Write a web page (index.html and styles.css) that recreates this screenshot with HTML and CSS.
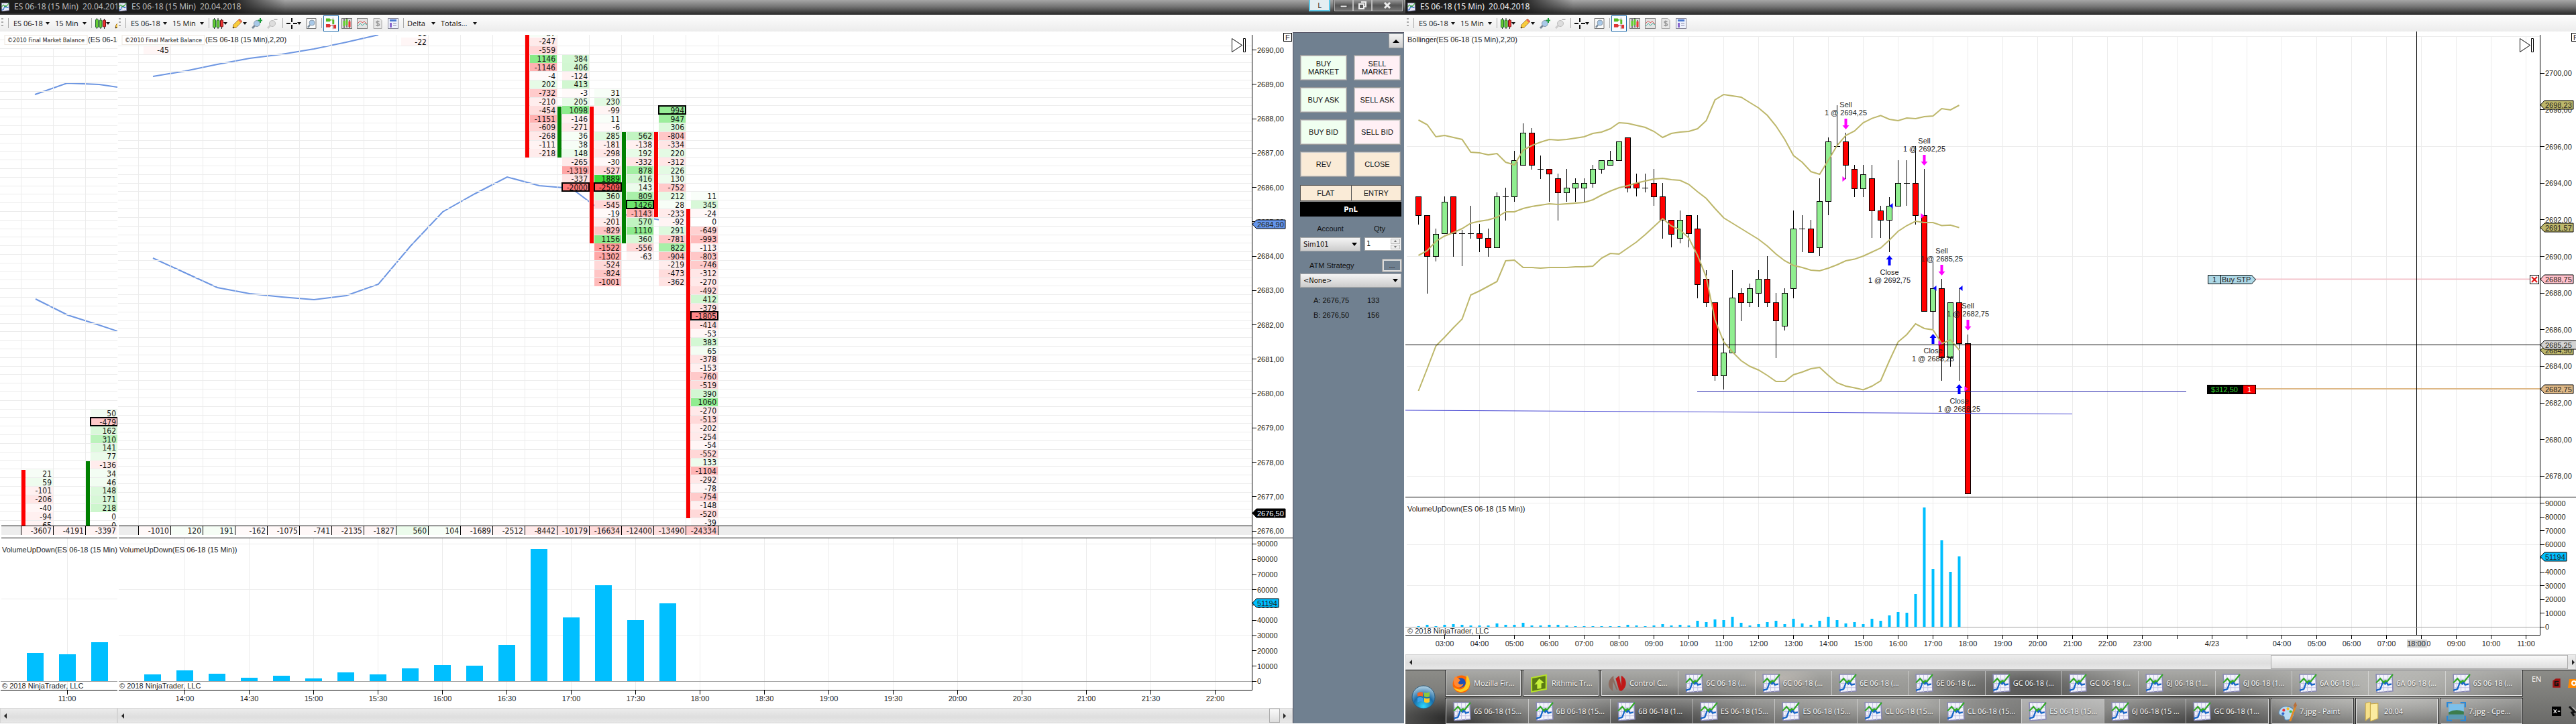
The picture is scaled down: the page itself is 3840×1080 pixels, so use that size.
FILE: index.html
```html
<!DOCTYPE html>
<html lang="en">
<head>
<meta charset="utf-8">
<title>ES 06-18 (15 Min) 20.04.2018</title>
<link rel="stylesheet" href="styles.css">
</head>
<body>
<svg class="sprites" aria-hidden="true">
  <symbol id="i-chart" viewBox="0 0 28 28"><path d="M3 1h23l1 24-23 2z" fill="#f4f4fc" stroke="#8888b4" stroke-width="1.5"/><path d="M8 2v24M14 2v24M20 2v24M4 8h22M4 14h22M4 20h22" stroke="#c4c4e4" stroke-width="1"/><path d="M3 24l6-2 4-11 3 4 1-4 3 5 5-1" fill="none" stroke="#1464c8" stroke-width="2.2" stroke-linejoin="round"/><path d="M3 13l6-6 5 6 2-3 3 1 8-10" fill="none" stroke="#34a828" stroke-width="2.2"/></symbol>
  <symbol id="i-candles" viewBox="0 0 16 16"><path d="M2.500 0v16M8 0v16M13.500 1v15" stroke="#222"/><rect x=".5" y="2" width="4" height="12" rx="1" fill="#6c3" stroke="#263"/><rect x="6" y="3" width="4" height="11" rx="1" fill="#6c3" stroke="#263"/><rect x="11.500" y="3" width="4" height="10" rx="1" fill="#e33" stroke="#611"/></symbol>
  <symbol id="i-pencil" viewBox="0 0 16 16"><path d="M1 15l1-5L11 1l4 4-9 9z" fill="#f8cc3c" stroke="#a8782c"/><path d="M11 1l4 4-2 2-4-4z" fill="#e86a5a"/><path d="M1 15l.5-2.500 2 2z" fill="#222"/></symbol>
  <symbol id="i-zoomin" viewBox="0 0 16 16"><path d="M1 15l5-5" stroke="#789" stroke-width="3"/><circle cx="8" cy="8" r="4.500" fill="#a8c8e8" stroke="#8a9aaa"/><path d="M13 0v7M9.500 3.500h6.500" stroke="#1a9a3a" stroke-width="2"/></symbol>
  <symbol id="i-zoomout" viewBox="0 0 16 16"><path d="M1 15l5-5" stroke="#ccc" stroke-width="3"/><circle cx="8" cy="8" r="4.500" fill="#ddd" stroke="#bbb"/><path d="M10.500 2h5" stroke="#aaa" stroke-width="1.500"/></symbol>
  <symbol id="i-cross" viewBox="0 0 16 16"><path d="M8 0v6M8 10v6M0 8h6M10 8h6" stroke="#111" stroke-width="2"/></symbol>
  <symbol id="i-page" viewBox="0 0 16 16"><path d="M1 .5h14v15H1z" fill="#fafafa" stroke="#777"/><path d="M3 14l3-4" stroke="#789" stroke-width="2.500"/><circle cx="9" cy="7" r="4" fill="#a8c8e8" stroke="#8a9aaa"/></symbol>
  <symbol id="i-trader" viewBox="0 0 18 18"><path d="M12 0v18" stroke="#888"/><path d="M1 1h6l2 2.500-2 2.500H1z" fill="#5b2"/><path d="M9 3.500h3" stroke="#5b2"/><path d="M1 10h6l2 2.500L7 15H1z" fill="#d33"/><path d="M9 12h3" stroke="#d33"/><rect x="11" y="3" width="3" height="7" fill="#5b2"/><rect x="13" y="11" width="4" height="6" fill="#d33"/></symbol>
  <symbol id="i-candbox" viewBox="0 0 16 16"><rect x=".5" y=".5" width="15" height="15" fill="#ddd" stroke="#777"/><path d="M4 1v14M8 0v14M12 3v12" stroke="#222"/><rect x="2.500" y="4" width="3" height="8" fill="#6c3"/><rect x="6.500" y="2" width="3" height="8" fill="#6c3"/><rect x="10.500" y="5" width="3" height="8" fill="#e33"/></symbol>
  <symbol id="i-ind" viewBox="0 0 16 16"><rect x=".5" y=".5" width="15" height="15" fill="#e4e4e4" stroke="#888"/><path d="M1 8l4-4 3 3 3-2 4 4" fill="none" stroke="#d55"/><path d="M1 12l4-4 3 3 4-3 3 2" fill="none" stroke="#4a9"/></symbol>
  <symbol id="i-dollar" viewBox="0 0 16 16"><path d="M2 .5h9l3 3v12H2z" fill="#e8e8e8" stroke="#aaa"/><path d="M10.500 5.500C8 4 5.500 5 6 6.500s4 1 4.500 3S8 12 5.500 10.500M8 3.500v9" fill="none" stroke="#999" stroke-width="1.500"/></symbol>
  <symbol id="i-props" viewBox="0 0 16 16"><rect x=".5" y=".5" width="15" height="15" fill="#eef2fc" stroke="#889"/><path d="M3 3.500h10" stroke="#4a78d0" stroke-width="3"/><path d="M3 7h3v7H3z" fill="#86c"/><path d="M8 8h5M8 11h5" stroke="#88a"/></symbol>
  <symbol id="i-firefox" viewBox="0 0 28 28"><circle cx="14" cy="15" r="12.500" fill="#f60"/><path d="M22 2c5 6 6 16 0 21-6 5-16 4-19-4 5 5 13 5 16-1s1-11 3-16z" fill="#fc2"/><circle cx="13" cy="13" r="7" fill="#1a50b8"/><path d="M5 4c4 1 5 4 8 5-2 1-2 3-4 4 2 3 6 3 8 1-1 6-9 8-13 2-2-4-1-9 1-12z" fill="#f83"/></symbol>
  <symbol id="i-rithmic" viewBox="0 0 28 28"><path d="M3 6l21-4v20L3 26z" fill="#5a7a14" stroke="#b6e02c" stroke-width="2"/><path d="M14 7l7 6-4 1v7l-6 1v-7l-4 1z" fill="#c6f03c"/></symbol>
  <symbol id="i-control" viewBox="0 0 28 28"><path d="M9 3C-1 10 0 20 8 25V11l5 12h2L9 7z" fill="#8c6c60"/><path d="M17 3l3 15V3c9 4 9 17 0 22l-3-1-5-17z" fill="#c01818"/></symbol>
  <symbol id="i-paint" viewBox="0 0 28 28"><path d="M3 12C7 4 22 5 24 14c1 9-7 13-12 12-4-1 0-5-4-6S0 18 3 12z" fill="#b8dcf4" stroke="#5a88b0"/><circle cx="9" cy="12" r="2" fill="#e33"/><circle cx="15" cy="10" r="2" fill="#fb2"/><circle cx="19" cy="14" r="2" fill="#4b4"/><circle cx="8" cy="17" r="2" fill="#36c"/><path d="M26 6L18 28" stroke="#e08a2a" stroke-width="3"/><path d="M26 0l2 5-3 4-2-4z" fill="#b8703a"/></symbol>
  <symbol id="i-folder" viewBox="0 0 28 28"><path d="M5 2l7-2v22l-7 5z" fill="#f6e08a" stroke="#c8a848"/><path d="M12 3l11-1v22l-11 4z" fill="#fcebA0" stroke="#c8a848"/></symbol>
  <symbol id="i-jpg" viewBox="0 0 28 28"><rect x="3" y="3" width="22" height="22" fill="#7cc0ea"/><path d="M3 15q10-6 22-1v5H3z" fill="#3c7c4c"/><path d="M3 18h22v7H3z" fill="#5a9ab0"/><path d="M1 8V1h7M20 1h7v7M27 20v7h-7M8 27H1v-7" fill="none" stroke="#2a88d8" stroke-width="2.500"/></symbol>
</svg>

<main class="desk">
  <section class="win" id="win-a">
    <header class="title"><svg class="appicon"><use href="#i-chart"/></svg><span>ES 06-18 (15 Min)&nbsp; 20.04.2018</span></header>
    <div class="toolbar">
      <i class="grip"></i><i class="sep"></i>
      <label class="dd wide"><select aria-label="Instrument"><option>ES 06-18</option></select></label>
      <label class="dd mid"><select aria-label="Interval"><option>15 Min</option></select></label>
      <i class="sep"></i>
      <button class="tb drop" aria-label="Chart style"><svg><use href="#i-candles"/></svg></button>
      <button class="tb drop" aria-label="Draw"><svg><use href="#i-pencil"/></svg></button>
    </div>
    <div class="chart" id="chart-a"></div>
    <div class="scroll"><button class="arrow left" aria-label="Scroll left"></button></div>
  </section>

  <section class="win" id="win-b">
    <header class="title"><svg class="appicon"><use href="#i-chart"/></svg><span>ES 06-18 (15 Min)&nbsp; 20.04.2018</span>
      <div class="caption">
        <button class="link">L</button>
        <div class="sys">
          <button aria-label="Minimise"><svg viewBox="0 0 14 12"><rect x="2" y="6" width="10" height="3" fill="#eee" stroke="#444"/></svg></button>
          <button aria-label="Restore"><svg viewBox="0 0 14 12"><path d="M5 1h7v7h-2M2 4h7v7H2z" fill="none" stroke="#eee" stroke-width="2"/></svg></button>
          <button class="close" aria-label="Close"><svg viewBox="0 0 14 12"><path d="M3 2l8 8M11 2l-8 8" stroke="#eee" stroke-width="3"/></svg></button>
        </div>
      </div>
    </header>
    <div class="toolbar">
      <i class="grip"></i><i class="sep"></i>
      <label class="dd wide"><select aria-label="Instrument"><option>ES 06-18</option></select></label>
      <label class="dd mid"><select aria-label="Interval"><option>15 Min</option></select></label>
      <i class="sep"></i>
      <button class="tb drop" aria-label="Chart style"><svg><use href="#i-candles"/></svg></button>
      <button class="tb drop" aria-label="Draw"><svg><use href="#i-pencil"/></svg></button>
      <button class="tb" aria-label="Zoom in"><svg><use href="#i-zoomin"/></svg></button>
      <button class="tb" aria-label="Zoom out"><svg><use href="#i-zoomout"/></svg></button>
      <i class="sep"></i>
      <button class="tb drop" aria-label="Cursor"><svg><use href="#i-cross"/></svg></button>
      <button class="tb" aria-label="Find"><svg><use href="#i-page"/></svg></button>
      <i class="sep"></i>
      <button class="tb on" aria-label="Chart trader"><svg><use href="#i-trader"/></svg></button>
      <button class="tb" aria-label="Data series"><svg><use href="#i-candbox"/></svg></button>
      <button class="tb" aria-label="Indicators"><svg><use href="#i-ind"/></svg></button>
      <button class="tb" aria-label="Strategies"><svg><use href="#i-dollar"/></svg></button>
      <button class="tb" aria-label="Properties"><svg><use href="#i-props"/></svg></button>
      <i class="sep"></i>
      <label class="dd narrow"><select aria-label="Mode"><option>Delta</option></select></label>
      <label class="dd wide"><select aria-label="Totals"><option>Totals...</option></select></label>
    </div>
    <div class="body">
      <div class="col">
        <div class="chart" id="chart-b"></div>
        <div class="scroll"><button class="arrow left" aria-label="Scroll left"></button><span class="thumb small"></span><button class="arrow right" aria-label="Scroll right"></button></div>
      </div>
      <aside class="dom">
        <button class="up" aria-label="Collapse"></button>
        <div class="orders">
          <button class="buy">BUY<br>MARKET</button><button class="sell">SELL<br>MARKET</button>
          <button class="buy">BUY ASK</button><button class="sell">SELL ASK</button>
          <button class="buy">BUY BID</button><button class="sell">SELL BID</button>
          <button class="flat">REV</button><button class="flat">CLOSE</button>
        </div>
        <div class="pos"><span>FLAT</span><span>ENTRY</span></div>
        <div class="pnl">PnL</div>
        <div class="fields">
          <label for="acct">Account</label><label for="qty">Qty</label>
          <span class="box"><select id="acct"><option>Sim101</option></select></span>
          <span class="num"><input id="qty" type="number" value="1"><span class="spin"><button aria-label="More"></button><button aria-label="Less"></button></span></span>
        </div>
        <div class="atm"><label for="atm">ATM Strategy</label><button>...</button></div>
        <span class="box"><select id="atm"><option>&lt;None&gt;</option></select></span>
        <dl class="quote"><dt>A: 2676,75</dt><dd>133</dd><dt>B: 2676,50</dt><dd>156</dd></dl>
      </aside>
    </div>
  </section>

  <div class="side">
    <section class="win active" id="win-c">
      <header class="title"><svg class="appicon"><use href="#i-chart"/></svg><span>ES 06-18 (15 Min)&nbsp; 20.04.2018</span></header>
      <div class="toolbar">
        <i class="grip"></i><i class="sep"></i>
        <label class="dd wide"><select aria-label="Instrument"><option>ES 06-18</option></select></label>
        <label class="dd mid"><select aria-label="Interval"><option>15 Min</option></select></label>
        <i class="sep"></i>
        <button class="tb drop" aria-label="Chart style"><svg><use href="#i-candles"/></svg></button>
        <button class="tb drop" aria-label="Draw"><svg><use href="#i-pencil"/></svg></button>
        <button class="tb" aria-label="Zoom in"><svg><use href="#i-zoomin"/></svg></button>
        <button class="tb" aria-label="Zoom out"><svg><use href="#i-zoomout"/></svg></button>
        <i class="sep"></i>
        <button class="tb drop" aria-label="Cursor"><svg><use href="#i-cross"/></svg></button>
        <button class="tb" aria-label="Find"><svg><use href="#i-page"/></svg></button>
        <i class="sep"></i>
        <button class="tb on" aria-label="Chart trader"><svg><use href="#i-trader"/></svg></button>
        <button class="tb" aria-label="Data series"><svg><use href="#i-candbox"/></svg></button>
        <button class="tb" aria-label="Indicators"><svg><use href="#i-ind"/></svg></button>
        <button class="tb" aria-label="Strategies"><svg><use href="#i-dollar"/></svg></button>
        <button class="tb" aria-label="Properties"><svg><use href="#i-props"/></svg></button>
      </div>
      <div class="chart" id="chart-c"></div>
      <div class="scroll"><button class="arrow left" aria-label="Scroll left"></button><span class="thumb large"></span><button class="arrow right" aria-label="Scroll right"></button></div>
    </section>
    <footer class="taskbar">
      <button class="orb" aria-label="Start"><svg viewBox="0 0 36 36"><defs><radialGradient id="orbfill" cx=".5" cy=".9" r=".9"><stop offset="0" stop-color="#2cd8ff"/><stop offset=".5" stop-color="#1a6ca8"/><stop offset="1" stop-color="#b8d4e4"/></radialGradient></defs><circle cx="18" cy="18" r="17" fill="url(#orbfill)" stroke="#2a5a7a"/><path d="M9 12q4-3 8-1v6q-4-2-8 0z" fill="#f06428"/><path d="M19 11q4 2 8-1v7q-4 2-8 0z" fill="#8cc83c"/><path d="M9 19q4-2 8 0v6q-4-2-8 1z" fill="#3ca0e8"/><path d="M19 19q4 2 8 0v6q-4 3-8 0z" fill="#fcc828"/></svg></button>
      <div class="tasks">
        <nav class="trow">
          <a href="#" class="task solo"><svg><use href="#i-firefox"/></svg>Mozilla Fir...</a>
          <a href="#" class="task solo"><svg><use href="#i-rithmic"/></svg>Rithmic Tr...</a>
          <div class="group">
            <a href="#" class="task"><svg><use href="#i-control"/></svg>Control C...</a>
            <a href="#" class="task"><svg><use href="#i-chart"/></svg>6C 06-18 (...</a>
            <a href="#" class="task"><svg><use href="#i-chart"/></svg>6C 06-18 (...</a>
            <a href="#" class="task"><svg><use href="#i-chart"/></svg>6E 06-18 (...</a>
            <a href="#" class="task"><svg><use href="#i-chart"/></svg>6E 06-18 (...</a>
            <a href="#" class="task"><svg><use href="#i-chart"/></svg>GC 06-18 (...</a>
            <a href="#" class="task"><svg><use href="#i-chart"/></svg>GC 06-18 (...</a>
            <a href="#" class="task"><svg><use href="#i-chart"/></svg>6J 06-18 (1...</a>
            <a href="#" class="task"><svg><use href="#i-chart"/></svg>6J 06-18 (1...</a>
            <a href="#" class="task"><svg><use href="#i-chart"/></svg>6A 06-18 (...</a>
            <a href="#" class="task"><svg><use href="#i-chart"/></svg>6A 06-18 (...</a>
            <a href="#" class="task"><svg><use href="#i-chart"/></svg>6S 06-18 (...</a>
          </div>
        </nav>
        <nav class="trow second">
          <div class="group">
            <a href="#" class="task"><svg><use href="#i-chart"/></svg>6S 06-18 (15...</a>
            <a href="#" class="task"><svg><use href="#i-chart"/></svg>6B 06-18 (15...</a>
            <a href="#" class="task"><svg><use href="#i-chart"/></svg>6B 06-18 (1...</a>
            <a href="#" class="task"><svg><use href="#i-chart"/></svg>ES 06-18 (15...</a>
            <a href="#" class="task"><svg><use href="#i-chart"/></svg>ES 06-18 (15...</a>
            <a href="#" class="task"><svg><use href="#i-chart"/></svg>CL 06-18 (15...</a>
            <a href="#" class="task"><svg><use href="#i-chart"/></svg>CL 06-18 (15...</a>
            <a href="#" class="task current"><svg><use href="#i-chart"/></svg>ES 06-18 (15...</a>
            <a href="#" class="task"><svg><use href="#i-chart"/></svg>6J 06-18 (15 ...</a>
            <a href="#" class="task"><svg><use href="#i-chart"/></svg>GC 06-18 (1...</a>
          </div>
          <a href="#" class="task solo"><svg><use href="#i-paint"/></svg>7.jpg - Paint</a>
          <a href="#" class="task solo"><svg><use href="#i-folder"/></svg>20.04</a>
          <a href="#" class="task solo"><svg><use href="#i-jpg"/></svg>7.jpg - Cpe...</a>
        </nav>
      </div>
      <div class="tray">
        <span>EN</span>
        <svg class="t1" viewBox="0 0 12 14"><path d="M1 4l4-3h6v12H1z" fill="#a01414"/><path d="M9 5H4v5h4V8H6" fill="none" stroke="#111" stroke-width="1.500"/></svg>
        <svg class="t2" viewBox="0 0 14 14"><path d="M2 1h12v13H0z" fill="#f80"/><circle cx="9" cy="7" r="3" fill="none" stroke="#fff" stroke-width="2"/></svg>
        <svg class="t3" viewBox="0 0 16 16"><path d="M0 0h16v16H0z"/><path d="M3 5l5 6M8 5l-5 6M10 8h4" stroke="#eee" stroke-width="1.500"/></svg>
        <svg class="t4" viewBox="0 0 12 16"><path d="M1 1l8 8-4 1 3 5" fill="none" stroke="#111" stroke-width="3"/><path d="M6 2l5 5" stroke="#eee"/></svg>
      </div>
    </footer>
  </div>
</main>
<script src="script.js"></script>
</body>
</html>
```
FILE: styles.css
```css
* { box-sizing: border-box; }
body { margin: 0; background: #fff; color: #111; font: 11px/13px "Liberation Sans", Arial, sans-serif; overflow: hidden; }
button, select, input { font: inherit; color: inherit; margin: 0; padding: 0; border: 0; border-radius: 0; background: none; }
.sprites { position: absolute; width: 0; height: 0; }
.desk { display: grid; grid-template-columns: 175fr 1920fr 1745fr; height: 100vh; }
.win { display: flex; flex-direction: column; min-width: 0; min-height: 0; overflow: hidden; background: #fff; }
#win-a, #win-b { padding-bottom: 1px; }
.side { display: flex; flex-direction: column; min-width: 0; }
.side .win { flex: 1; }

/* title bars */
.title { display: flex; align-items: center; gap: 7px; flex: none; height: 22px; padding-left: 1px; overflow: hidden; white-space: nowrap;
  font: 12px/20px "Open Sans", "Noto Sans", sans-serif; color: #c4c4c4; border-bottom: 2px solid #333;
  background: linear-gradient(90deg, #1c1c1c 170px, rgba(28,28,28,0) 250px), linear-gradient(#a6a6a6, #747474 50%, #333); }
.active .title { color: #fff; padding-left: 2px; }
.appicon { width: 13px; height: 13px; flex: none; }
.caption { display: flex; margin-left: auto; align-self: flex-start; gap: 5px; padding-right: 3px; }
.link { width: 32px; height: 17px; border: 2px solid #5cc8e8; border-top: 0; background: #e4eef2; font: 11px/14px "Open Sans", sans-serif; color: #222; }
.sys { display: flex; height: 18px; border: 1px solid #222; border-top: 0; }
.sys button { width: 28px; border: 1px solid #bbb; border-top: 0; background: linear-gradient(#999, #555 50%, #777); }
.sys .close { width: 46px; }
.sys svg { display: block; width: 14px; height: 12px; margin: 0 auto; }

/* toolbars */
.toolbar { display: flex; align-items: center; flex: none; height: 25px; padding-left: 2px; overflow: hidden; background: linear-gradient(#fdfdfd, #ececec); font: 11px/16px "Open Sans", "Noto Sans", sans-serif; }
.grip { width: 3px; height: 15px; margin-right: 7px; flex: none; background: repeating-linear-gradient(#aaa 0 2px, transparent 2px 5px); }
.sep { width: 1px; height: 15px; margin: 0 5px 0 7px; flex: none; background: #aaa; }
.dd { display: flex; align-items: center; margin-right: 8px; flex: none; }
.dd select { appearance: none; height: 16px; }
.dd::after, .drop::after { content: ""; border: 3px solid transparent; border-top: 4px solid #111; border-bottom: 0; flex: none; }
.grip + .sep { margin: 0 7px 0 0; }
.wide select { width: 48px; }
.mid select { width: 41px; }
.narrow select { width: 36px; }
.mid { margin-right: 0; }
.tb { display: flex; align-items: center; flex: none; margin-right: 7px; }
.drop + .sep, .tb + .sep { margin-left: 0; }
.tb svg { width: 16px; height: 16px; flex: none; }
.on { padding: 2px; border: 1px solid #1c68a8; background: #f8fbff; margin: 0 4px 0 -3px; }
.tb.on svg { width: 17px; height: 18px; }

/* chart panes */
.body { display: flex; flex: 1; min-height: 0; padding-right: 2px; }
.col { display: flex; flex-direction: column; flex: 1; min-width: 0; }
.chart { display: flex; flex: 1; min-height: 0; }
.plot { flex: 1; min-width: 0; height: 100%; display: block; overflow: hidden; }
.axis { flex: none; height: 100%; display: block; overflow: hidden; }
.chart text { font: 11px "Liberation Sans", Arial, sans-serif; fill: #222; }
.chart .cell { font: 12px "DejaVu Sans Condensed", "Noto Sans", sans-serif; fill: #111; text-anchor: end; }
.chart .brand { font: 9px "DejaVu Sans Condensed", "Noto Sans", sans-serif; }
.chart .mid-text { text-anchor: middle; }
.chart .light { fill: #fff; }
.chart .gain { fill: #2cd02c; }

/* scroll bars */
.scroll { display: flex; align-items: center; flex: none; height: 23px; border: 1px solid #d4d4d4; background: linear-gradient(#ececec, #dedede 60%, #e8e8e8); }
.arrow { width: 18px; height: 20px; display: flex; align-items: center; justify-content: center; flex: none; }
.arrow::before { content: ""; border: 4px solid transparent; }
.left { padding-right: 8px; }
.left::before { border-right-color: #222; }
.right::before { border-left-color: #222; }
.thumb { height: 21px; margin-left: auto; border: 1px solid #aaa; background: linear-gradient(#fafafa, #dedede); }
.small { width: 16px; }
.large { flex: 0 0 443px; }
#win-c .right { width: 11px; padding-left: 8px; }

/* order entry panel */
.dom { flex: none; width: 166px; display: flex; flex-direction: column; padding: 1px 4px 0 10px; background: #708090; border-left: 1px solid #556; border-top: 1px solid #556; margin-top: 1px; }
.up { align-self: flex-end; width: 22px; height: 22px; margin-right: -3px; border: 1px solid #999; background: linear-gradient(#f4f4f4, #ccc); display: grid; place-items: center; }
.up::before { content: ""; border: 5px solid transparent; border-bottom-color: #000; border-top: 0; }
.orders { display: grid; grid-template-columns: 1fr 1fr; gap: 10px; margin: 10px 1px 0 0; }
.orders button { height: 38px; border: 2px solid #ccc; outline: 1px solid #999; outline-offset: -1px; line-height: 12px; }
.buy { background: #f0fff0; }
.sell { background: #fff0f5; }
.flat { background: #faebd7; }
.pos { display: grid; grid-template-columns: 1fr 1fr; margin-top: 12px; height: 24px; border: 1px solid #555; background: #faebd7; line-height: 23px; text-align: center; }
.pos span + span { border-left: 1px solid #555; }
.pnl { height: 23px; background: #000; color: #fff; font: bold 11px/23px "DejaVu Sans Condensed", "Noto Sans", sans-serif; text-align: center; border-top: 1px solid #888; }
.fields { display: grid; grid-template-columns: 90px 1fr; column-gap: 6px; row-gap: 6px; margin-top: 12px; }
.fields label { text-align: center; }
.fields label + label { text-align: left; padding-left: 14px; }
.box { position: relative; display: flex; height: 21px; border: 1px solid #aaa; background: linear-gradient(#f4f4f4, #ccc); }
.box select { appearance: none; flex: 1; padding: 0 4px; font: 11px/18px "DejaVu Sans Condensed", "Noto Sans", sans-serif; }
.box::after { content: ""; position: absolute; right: 4px; top: 7px; border: 4px solid transparent; border-top: 5px solid #000; border-bottom: 0; pointer-events: none; }
.num { display: flex; height: 20px; border: 1px solid #aaa; background: #fff; min-width: 0; }
.num input { appearance: textfield; width: 20px; flex: 1; min-width: 0; padding-left: 2px; font: 11px/16px "DejaVu Sans Condensed", "Noto Sans", sans-serif; }
.num input::-webkit-inner-spin-button { display: none; }
.spin { display: grid; width: 14px; gap: 1px; margin: 1px; }
.spin button { border: 1px solid #bbb; background: #eee; display: grid; place-items: center; }
.spin button::before { content: ""; border: 2px solid transparent; border-bottom: 3px solid #777; border-top: 0; }
.spin button + button::before { border: 2px solid transparent; border-top: 3px solid #777; border-bottom: 0; }
.atm { display: flex; align-items: center; justify-content: space-between; height: 18px; margin: 12px 0 3px; padding-left: 14px; }
.atm button { width: 28px; height: 18px; border: 2px solid #ddd; outline: 1px solid #999; line-height: 10px; }
.quote { display: grid; grid-template-columns: 80px 1fr; row-gap: 9px; margin: 13px 0 0 20px; }
.quote dd { margin: 0; }

/* task bar */
.taskbar { display: flex; flex: none; height: 81px; border-top: 1px solid #222; padding-left: 9px; color: #fff; font: 11px/14px "Open Sans", "Noto Sans", sans-serif;
  background:
    radial-gradient(60px 20px at 32% 15%, rgba(200,190,180,.5), transparent),
    radial-gradient(160px 50px at 22% 90%, rgba(40,40,40,.8), transparent),
    radial-gradient(120px 40px at 4% 90%, rgba(20,20,20,.8), transparent),
    radial-gradient(180px 60px at 53% 20%, rgba(30,30,30,.7), transparent),
    radial-gradient(150px 50px at 68% 90%, rgba(30,30,30,.7), transparent),
    radial-gradient(200px 60px at 84% 40%, rgba(210,210,205,.6), transparent),
    radial-gradient(200px 40px at 42% 60%, rgba(180,180,175,.5), transparent),
    linear-gradient(#8c8c88, #6a6a68); }
.orb { width: 36px; flex: none; margin-right: 15px; }
.orb svg { display: block; width: 36px; height: 36px; }
.tasks { display: flex; flex-direction: column; gap: 4px; flex: 1; min-width: 0; }
.trow { display: flex; gap: 4px; height: 38px; }
.group { display: flex; flex: 1; min-width: 0; border: 1px solid #e0e0e0; outline: 1px solid #222; }
.task { display: flex; align-items: center; gap: 4px; flex: 1; min-width: 0; padding-left: 8px; overflow: hidden; white-space: nowrap; color: #fff; text-decoration: none; text-shadow: 0 1px 2px #222; background: linear-gradient(rgba(255,255,255,.25), rgba(255,255,255,.05)); }
.task + .task:not(.solo) { border-left: 1px solid rgba(230,230,230,.6); }
.task svg { width: 29px; height: 29px; flex: none; }
.solo { flex: 0 0 112px; border: 1px solid #e0e0e0; outline: 1px solid #222; }
.second .solo { flex-basis: 122px; }
.current { background: linear-gradient(rgba(255,255,255,.55), rgba(255,255,255,.35)); }
.tray { display: grid; grid-template-columns: 30px 24px 12px; grid-template-rows: 38px 38px; row-gap: 4px; align-items: center; flex: none; width: 80px; padding-left: 14px; overflow: hidden; }
.tray span { padding-bottom: 12px; }
.tray svg { height: 16px; width: 14px; }
.t3 { grid-column: 2; }
```
FILE: script.js
```js
/* Chart rendering. Every chart is drawn in desktop coordinates and shifted to its pane. */
const TOP = 47;
const ROW = 12.81;
const GRID = '#ececec';
const line = (x1, y1, x2, y2, c, w = 1) => `<line x1="${x1}" y1="${y1}" x2="${x2}" y2="${y2}" stroke="${c}" stroke-width="${w}"/>`;
const rect = (x, y, w, h, f, extra = '') => `<rect x="${x}" y="${y}" width="${w}" height="${h}" fill="${f}" ${extra}/>`;
const text = (x, y, s, cls = '') => `<text x="${x}" y="${y}" class="${cls}">${s}</text>`;
const poly = (pts, c, w = 2) => `<polyline points="${pts.map(p => p.join(',')).join(' ')}" fill="none" stroke="${c}" stroke-width="${w}"/>`;
const snap = v => Math.floor(v) + 0.5;

function mount(id, x0, plot, axis, axisX, axisW) {
  let out = `<svg class="plot"><g transform="translate(${-x0} ${-TOP})">${plot}</g></svg>`;
  if (axis) out += `<svg class="axis" width="${axisW}"><g transform="translate(${-axisX} ${-TOP})">${axis}</g></svg>`;
  document.getElementById(id).innerHTML = out;
}

function tint(v, kr, kg) {
  if (v === 0) return '#fff';
  const a = Math.min(0.9, 0.02 + Math.abs(v) * (v < 0 ? kr : kg));
  const mix = (c) => Math.round(255 - (255 - c) * a);
  return v < 0 ? `rgb(255,${mix(0)},${mix(0)})` : `rgb(${mix(0)},${mix(211)},${mix(0)})`;
}

/* One footprint column: candle body strip plus a stack of delta cells. */
function footprint(x, first, values, box, bar, base, kr, kg) {
  let s = '';
  if (bar) s += rect(x + 1, bar[1], 6, bar[2] - bar[1], bar[0]);
  values.forEach((v, i) => {
    const yc = base + (first + i) * ROW;
    s += rect(x + 8, Math.round(yc - 5.9), 40, 12, tint(v, kr, kg));
    if (i === box) s += rect(x + 8, Math.round(yc - 6.4), 40, 12, 'none', 'stroke="#000" stroke-width="2"');
    s += text(x + 46, Math.round(yc + 4.6), v, 'cell');
  });
  return s;
}

function deltaRow(x0, xEnd, start, values) {
  let s = rect(x0, 784, xEnd - x0, 19, '#fff') + rect(x0, 785, xEnd - x0, 13, '#ededed');
  values.forEach((v, i) => {
    const x = start + i * 48;
    s += rect(x, 785, 48, 13, tint(v, 0.0000075, 0.0001));
    s += line(x + 0.5, 784, x + 0.5, 798, '#000');
    s += text(x + 46, 796, v, 'cell');
  });
  const end = start + values.length * 48 + 0.5;
  s += line(end, 784, end, 798, '#000');
  return s + line(x0, 784.5, xEnd, 784.5, '#000') + line(x0, 802.5, xEnd, 802.5, '#000');
}

function tag(x, y, s, fill, cls = '', w = 49) {
  return `<path d="M${x} ${y}l6 -6.500h${w - 6}v13h${6 - w}z" fill="${fill}" stroke="#000"/>` + text(x + 7, y + 4, s, cls);
}

const notice = x => rect(x, 52.5, 123, 14, '#fff', 'stroke="#eee8e0"') + text(x + 4, 63, '©2010 Final Market Balance', 'brand');
const skip = x => `<path d="M${x} 57.500v20l15 -10zM${x + 17} 57.500h3v20h-3z" fill="#fff" stroke="#000"/>`;

/* ---------- narrow footprint window ---------- */
(function () {
  let s = '';
  s += poly([[52, 141], [100, 124], [148, 126], [196, 133]], '#6d96e2');
  s += poly([[53, 446], [101, 470], [148, 485], [196, 501]], '#6d96e2');
  for (let y = 59.3; y < 784; y += ROW) s += line(0, snap(y), 175, snap(y), GRID);
  for (const x of [31.5, 79.5, 127.5]) s += line(x, 72, x, 784, GRID);
  s += footprint(31, 50, [21, 59, -101, -206, -40, -94, -65], -1, ['#ff0000', 701, 784], 65.7, 0.0004, 0.0008);
  s += footprint(127, 43, [50, -479, 162, 310, 141, 77, -136, 34, 46, 148, 171, 218, 0, 0], 1, ['#008000', 688, 784], 65.7, 0.0004, 0.0008);
  s += rect(0, TOP, 175, 5, '#fff');
  s += notice(7) + text(131, 63, '(ES 06-18 (15 Min),2,20)');
  s += deltaRow(2, 175, 31, [-3607, -4191, -3397]);
  s += line(100.5, 803, 100.5, 1029, GRID) + line(2, 893.5, 175, 893.5, GRID);
  [[40, 974], [88, 976], [136, 958]].forEach(b => { s += rect(b[0], b[1], 25, 1016 - b[1], '#00bfff'); });
  s += line(1, 1016.5, 175, 1016.5, '#a0a0a0') + line(1, 1029.5, 175, 1029.5, '#000') + line(100.5, 1029, 100.5, 1036, '#000');
  s += text(3, 856, 'VolumeUpDown(ES 06-18 (15 Min))').replace('856', '824') + text(3, 1027, '© 2018 NinjaTrader, LLC') + text(100, 1046, '11:00', 'mid-text');
  mount('chart-a', 0, s);
})();

/* ---------- wide footprint window ---------- */
(function () {
  const base = 74.6, kr = 0.00025, kg = 0.00039, R = 1867;
  let s = '';
  s += poly([[228, 114], [276, 106], [324, 96], [372, 87], [420, 81], [468, 73], [516, 63], [564, 52]], '#6d96e2');
  s += poly([385, 407, 429, 438, 443, 447, 441, 424, 367, 316, 289, 264, 277, 281, 317, 322, 330].map((y, i) => [228 + 48 * i, y]), '#6d96e2');
  for (let y = 68.2; y < 784; y += ROW) s += line(176, snap(y), R, snap(y), GRID);
  for (let x = 206.5; x < 1072; x += 48) s += line(x, 52, x, 784, GRID);
  s += rect(214, 69, 40, 12, '#fff6f6') + text(252, 79, '-45', 'cell');
  s += rect(598, 56, 40, 12, '#fff6f6') + text(636, 54, '11', 'cell') + text(636, 67, '-22', 'cell');
  const red = '#f80000', green = '#008000';
  s += footprint(782, -2, [37, -247, -559, 1146, -1146, -4, 202, -732, -210, -454, -1151, -609, -268, -111, -218], -1, [red, 52, 235], base, kr, kg);
  s += footprint(830, 1, [384, 406, -124, 413, -3, 205, 1098, -146, -271, 36, 38, 148, -265, -1319, -337, -2000], 15, [green, 159, 235], base, kr, kg);
  s += footprint(878, 5, [31, 230, -99, 11, -6, 285, -181, -298, -30, -527, 1889, -2509, 360, -545, -19, -201, -829, 1156, -1522, -1302, -524, -824, -1001], 11, [red, 159, 363], base, kr, kg);
  s += footprint(926, 10, [562, -138, 192, -332, 878, 416, 143, 809, 1426, -1143, 570, 1110, 360, -556, -63], 8, [green, 197, 363], base, kr, kg);
  s += footprint(974, 7, [994, 947, 306, -804, -334, 220, -312, 226, 130, -752, 212, 28, -233, -92, 291, -781, 822, -904, -219, -473, -362], 0, [red, 197, 324], base, kr, kg);
  s += footprint(1022, 17, [11, 345, -24, 0, -649, -993, -113, -803, -746, -312, -270, -492, 412, -379, -1805, -414, -53, 383, 65, -378, -153, -760, -519, 390, 1060, -270, -513, -202, -254, -54, -552, 133, -1104, -292, -78, -754, -148, -520, -39], 14, [red, 312, 773], base, kr, kg);
  s += rect(175, TOP, 1692, 5, '#fff');
  s += notice(182) + text(306, 63, '(ES 06-18 (15 Min),2,20)') + skip(1836.5);
  s += deltaRow(177, R, 206, [-1010, 120, 191, -162, -1075, -741, -2135, -1827, 560, 104, -1689, -2512, -8442, -10179, -16634, -12400, -13490, -24334]);
  for (const y of [811.5, 879.5, 948.5]) s += line(177, y, R, y, GRID);
  let h = 14 * 60;
  for (let x = 275.5; x < R; x += 96, h += 30) {
    s += line(x, 803, x, 1029, GRID) + line(x, 1029, x, 1036, '#000');
    s += text(x, 1046, `${Math.floor(h / 60)}:${h % 60 ? '30' : '00'}`, 'mid-text');
  }
  [1006, 1000, 1005, 1011, 1008, 1012, 1003, 1006, 997, 992, 993, 962, 819, 921, 873, 925, 900].forEach((y, i) => { s += rect(215 + 48 * i, y, 25, 1016 - y, '#00bfff'); });
  s += line(177, 1016.5, R, 1016.5, '#a0a0a0') + line(177, 1029.5, R, 1029.5, '#000');
  s += text(178, 824, 'VolumeUpDown(ES 06-18 (15 Min))') + text(178, 1027, '© 2018 NinjaTrader, LLC');

  let a = line(1866.5, 52, 1866.5, 1030, '#000');
  for (let p = 2690; p >= 2676; p--) {
    const y = 74.6 + (2690 - p) * 51.25;
    a += line(1867, snap(y), 1873, snap(y), '#000') + text(1874, Math.round(y + 4), p + ',00');
  }
  a += line(1866, 802.5, 1927, 802.5, '#000');
  for (let v = 0; v <= 90000; v += 10000) {
    const y = 1016.4 - v * 0.002277;
    a += line(1867, snap(y), 1873, snap(y), '#000') + text(1874, Math.round(y + 4), v);
  }
  a += tag(1867, 334.5, '2684,90', '#6495ed') + tag(1867, 765.5, '2676,50', '#000', 'light') + tag(1867, 899.5, '51194', '#00bfff', '', 39);
  a += rect(1913.5, 49.5, 12, 12, '#fff', 'stroke="#000"') + text(1916, 60, 'F');
  mount('chart-b', 175, s, a, 1866, 61);
})();

/* ---------- candlestick window ---------- */
(function () {
  const R = 3786;
  const cx = i => 2114.5 + 13 * i;
  /* high, body top, body bottom, low, direction */
  const candles = [
    [293,293,321,335,'r'],[321,321,382,438,'r'],[341,349,382,390,'g'],[293,301,348,348,'g'],[293,293,348,383,'r'],[343,348,348,397,'d'],[307,348,348,356,'d'],[334,348,355,376,'r'],
    [341,355,369,383,'r'],[287,293,369,369,'g'],[280,293,293,329,'d'],[225,239,293,301,'g'],[184,198,246,246,'g'],[191,198,246,253,'r'],[232,252,252,267,'d'],[252,252,259,301,'r'],
    [259,266,287,329,'r'],[252,280,287,301,'g'],[266,273,280,301,'g'],[266,273,280,301,'g'],[246,252,273,280,'g'],[239,239,252,259,'g'],[225,239,246,246,'g'],[211,211,239,239,'g'],
    [205,205,280,287,'r'],[259,273,280,293,'r'],[259,280,280,287,'d'],[252,273,293,307,'r'],[273,293,328,356,'r'],[328,328,349,369,'r'],[314,328,355,363,'g'],[321,321,348,369,'r'],
    [321,341,424,445,'r'],[403,416,451,458,'r'],[451,451,560,568,'r'],[505,526,560,581,'g'],[403,444,526,526,'g'],[430,437,451,479,'r'],[423,430,451,458,'g'],[403,416,437,458,'g'],
    [382,416,451,458,'r'],[437,451,478,534,'r'],[430,437,486,493,'g'],[314,341,430,445,'g'],[321,341,341,376,'d'],[328,341,376,376,'r'],[266,300,369,382,'g'],[205,211,300,321,'g'],
    [157,218,218,218,'d'],[198,211,246,267,'r'],[246,252,281,294,'r'],[246,260,281,294,'g'],[246,266,314,355,'r'],[307,314,328,355,'r'],[294,307,328,376,'g'],[239,273,307,307,'g'],
    [239,273,273,307,'d'],[218,273,321,335,'r'],[252,321,464,464,'r'],[390,430,464,493,'g'],[416,430,533,568,'r'],[451,451,533,547,'g'],[430,451,512,568,'r'],[499,512,736,736,'r']
  ];
  const upper = [179,186,204,202,205,208,227,228,231,229,242,246,224,217,212,208,209,208,206,204,199,197,192,183,184,187,190,196,205,199,197,196,192,180,149,141,143,145,153,161,172,188,208,232,242,256,260,239,217,202,195.5,183,176.6,172.4,178,180,176,177,174,173,162,164,157];
  const middle = [381,374,360,352,347,341,333,330,328,324,316,316,311,308,306,304,305,304,303,302,298,291,285,280,277,273,270,267,266,268,269,275,286,296,311,325,333,341,349,357,367,379,389,396,399,403,404,400,395,389,386.6,382,376,370,358,345,336.5,330,332,332,336.5,335.7,339.5];
  const lower = [583,550,516,503,489,476,440,434,427,420,389,388,399,399,400,399,399,399,398,398,397,385,378,379,370,361,350,338,326,337,343,355,381,413.5,477,510,525,538,546.5,552,560,569,569,559,555,550,548,560,571,576,578.5,581.5,576,568,538,510,499,483,490,492,512.5,507,522];
  const volume = [1,3,1,3,4,3,2,2,2,5,3,3,6,2,2,3,3,2,1,1,1,1,1,1,3,2,1,2,4,2,3,2,9,7,11,10,15,6,2,4,7,9,4,12,5,3,9,15,10,5,7,4,12,9,17,22,21,49,178,86,129,82,105];
  const khaki = '#bdb76b';
  let s = '';
  for (const y of [54.5, 218.5, 382.5, 546.5, 710.5, 750.5, 812.5, 873.5]) s += line(2097, y, R, y, GRID);
  for (let k = 0; k <= 31; k++) {
    const x = 2153.5 + 52 * k;
    s += line(x, 54, x, 947, GRID) + line(x, 947, x, 953, '#000');
    let t = '';
    if (k <= 20) t = String(k + 3).padStart(2, '0') + ':00';
    else if (k === 22) t = '4/23';
    else if (k >= 24) t = String(k - 20).padStart(2, '0') + ':00';
    if (t) s += text(x, 964, t, 'mid-text');
  }
  candles.forEach(([hi, top, bot, lo, d], i) => {
    const x = cx(i);
    s += line(x, hi, x, lo, '#000');
    if (d === 'd') s += line(x - 4.5, top + 0.5, x + 4.5, top + 0.5, '#000');
    else s += rect(x - 4, top + 0.5, 8, bot - top, d === 'r' ? '#ff0000' : '#90ee90', 'stroke="#000"');
  });
  for (const b of [upper, middle, lower]) s += poly(b.map((y, i) => [cx(i), y]), khaki);
  volume.forEach((h, i) => { s += rect(cx(i) - 2, 935 - h, 4, h, '#00bfff'); });

  s += line(2530, 584.5, 3259, 584.5, '#1c1ca8') + line(2095, 612, 3089, 617.5, '#4646d2', 1);
  s += line(3362, 416.5, 3771, 416.5, '#f4c4cc', 2) + line(3362, 580, R, 580, '#deb887', 2);

  const magenta = '#ff00ff', blue = '#0000ff';
  const trade = (i, y, name, price) => text(cx(i), y + 4, name, 'mid-text') + text(cx(i), y + 16, '1 @ ' + price, 'mid-text');
  const down = (i, y) => `<path d="M${cx(i) - 2} ${y}h4v10h3l-5 6l-5 -6h3z" fill="${magenta}"/>`;
  const up = (i, y) => `<path d="M${cx(i)} ${y}l5 6h-3v9h-4v-9h-3z" fill="${blue}"/>`;
  s += trade(49, 156, 'Sell', '2694,25') + down(49, 177);
  s += trade(58, 210, 'Sell', '2692,25') + down(58, 231);
  s += trade(60, 374, 'Sell', '2685,25') + down(60, 395);
  s += trade(63, 456, 'Sell', '2682,75') + down(63, 477);
  s += trade(54, 406, 'Close', '2692,75') + up(54, 381);
  s += trade(59, 523, 'Close', '2688,25') + up(59, 498);
  s += trade(62, 598, 'Close', '2688,25') + up(62, 573);
  for (const [i, y] of [[49, 267], [58, 322], [60, 512], [63, 580]]) s += `<path d="M${cx(i)} ${y}l-5 -4v8z" fill="${magenta}"/>`;
  for (const [i, y] of [[54, 307], [59, 430], [62, 430]]) s += `<path d="M${cx(i)} ${y}l5 -4v8z" fill="${blue}"/>`;

  s += `<path d="M3291.500 410.500h65l6 6.500l-6 6.500h-65z" fill="#add8e6" stroke="#000"/>` + line(3310.5, 410, 3310.5, 424, '#000') + text(3301, 421, '1', 'mid-text') + text(3312, 421, 'Buy STP');
  s += rect(3290.5, 574.5, 72, 13, '#000', 'stroke="#000"') + rect(3344, 575, 18, 12, '#ff0000') + text(3316, 585, '$312,50', 'mid-text gain') + text(3353, 585, '1', 'mid-text light');
  s += rect(3771.5, 410.5, 13, 13, '#fff', 'stroke="#000"') + `<path d="M3774 413l8 8M3782 413l-8 8" stroke="#e01010" stroke-width="2"/>`;
  s += line(2095, 514.5, R, 514.5, '#000') + line(3602.5, 47, 3602.5, 947, '#000') + line(2095, 741.5, R, 741.5, '#000');
  s += line(2095, 935.5, R, 935.5, '#a0a0a0') + line(2095, 947.5, R, 947.5, '#000');
  s += rect(3588, 954, 30, 12, '#d3d3d3') + text(3602, 964, '18:00', 'mid-text');
  s += text(2098, 63, 'Bollinger(ES 06-18 (15 Min),2,20)') + text(2098, 763, 'VolumeUpDown(ES 06-18 (15 Min))') + text(2098, 945, '© 2018 NinjaTrader, LLC') + skip(3756.5);

  let a = line(3786.5, 52, 3786.5, 948, '#000');
  for (let p = 2700; p >= 2678; p -= 2) {
    const y = 382.5 + (2690 - p) * 27.33;
    a += line(3787, snap(y), 3793, snap(y), '#000') + text(3794, Math.round(y + 4), p + ',00');
  }
  for (let v = 0; v <= 90000; v += 10000) {
    const y = 935.4 - v * 0.002052;
    a += line(3787, snap(y), 3793, snap(y), '#000') + text(3794, Math.round(y + 4), v);
  }
  a += line(3786, 741.5, 3840, 741.5, '#000');
  a += tag(3787, 156.5, '2698,23', khaki) + tag(3787, 339.5, '2691,57', khaki) + tag(3787, 416.5, '2688,75', '#ffc0cb') + tag(3787, 522.5, '2684,90', khaki);
  a += tag(3787, 514.5, '2685,25', '#d3d3d3', '', 60) + tag(3787, 580.5, '2682,75', '#deb887') + tag(3787, 830.5, '51194', '#00bfff', '', 39);
  a += rect(3833.5, 49.5, 12, 12, '#fff', 'stroke="#000"') + text(3836, 60, 'F');
  mount('chart-c', 2095, s, a, 3786, 54);
})();
```
